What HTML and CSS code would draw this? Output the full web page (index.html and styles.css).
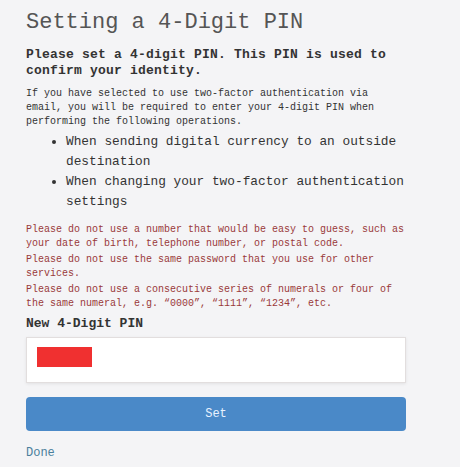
FILE: index.html
```html
<!DOCTYPE html>
<html lang="en">
<head>
    <meta charset="UTF-8">
    <meta name="viewport" content="width=device-width, initial-scale=1.0">
    <title>Setting a 4-Digit PIN</title>
    <link rel="stylesheet" href="styles.css">
</head>
<body>
    <!-- PIN Setup -->
    <section class="pin-page">
        <h1>Setting a 4-Digit PIN</h1>
        <p class="lead">Please set a 4-digit PIN. This PIN is used to confirm your identity.</p>
        <p class="info">If you have selected to use two-factor authentication via email, you will be required to enter your 4-digit PIN when performing the following operations.</p>
        <ul class="ops">
            <li>When sending digital currency to an outside destination</li>
            <li>When changing your two-factor authentication settings</li>
        </ul>

        <div class="warnings">
            <p>Please do not use a number that would be easy to guess, such as your date of birth, telephone number, or postal code.</p>
            <p>Please do not use the same password that you use for other services.</p>
            <p>Please do not use a consecutive series of numerals or four of the same numeral, e.g. “0000”, “1111”, “1234”, etc.</p>
        </div>

        <label class="field-label" for="pin">New 4-Digit PIN</label>
        <div class="input-box">
            <span class="redacted"></span>
            <input id="pin" type="password">
        </div>

        <button class="button">Set</button>
        <a class="done-link" href="#">Done</a>
    </section>
</body>
</html>
```

FILE: styles.css
```css
:root {
    --bg-primary: #f4f4f6;
    --text-primary: #333333;
    --text-title: #555555;
    --text-warning: #9a3a3a;
    --accent-primary: #4a89c8;
    --link-color: #4a7f9c;
    --font-primary: 'Liberation Mono', 'DejaVu Sans Mono', monospace;
}

body {
    margin: 0;
    padding: 0;
    font-family: var(--font-primary);
    background-color: var(--bg-primary);
    color: var(--text-primary);
}

.pin-page {
    display: flex;
    flex-direction: column;
    width: 380px;
    padding: 0 0 0 26px;
}

h1 {
    font-size: 22px;
    font-weight: normal;
    line-height: 26px;
    color: var(--text-title);
    margin: 10px 0 0;
}

.lead {
    font-size: 13px;
    font-weight: bold;
    line-height: 16px;
    letter-spacing: 0.2px;
    margin: 11px 0 0;
}

.info {
    font-size: 10px;
    line-height: 14px;
    margin: 8px 0 0;
}

.ops {
    margin: 3px 0 0;
    padding-left: 40px;
    font-size: 12.8px;
    line-height: 20px;
}

.warnings {
    margin-top: 11px;
    color: var(--text-warning);
    font-size: 10px;
    line-height: 14px;
}

.warnings p {
    margin: 0 0 2px;
}

.field-label {
    font-size: 13px;
    font-weight: bold;
    line-height: 16px;
    margin-top: 3px;
}

.input-box {
    position: relative;
    height: 44px;
    margin-top: 5px;
    background-color: #ffffff;
    border: 1px solid #e2dede;
    box-shadow: 0 1px 3px rgba(0, 0, 0, 0.08);
}

.input-box input {
    width: 100%;
    height: 100%;
    box-sizing: border-box;
    border: none;
    background: transparent;
    outline: none;
}

.redacted {
    position: absolute;
    left: 10px;
    top: 9px;
    width: 55px;
    height: 20px;
    background-color: #f03030;
}

.button {
    height: 34px;
    margin-top: 14px;
    font-size: 12px;
    font-family: var(--font-primary);
    color: #e8f2ff;
    background-color: var(--accent-primary);
    border: none;
    border-radius: 4px;
    cursor: pointer;
}

.done-link {
    align-self: flex-start;
    margin-top: 15px;
    font-size: 12px;
    color: var(--link-color);
    text-decoration: none;
}
```
